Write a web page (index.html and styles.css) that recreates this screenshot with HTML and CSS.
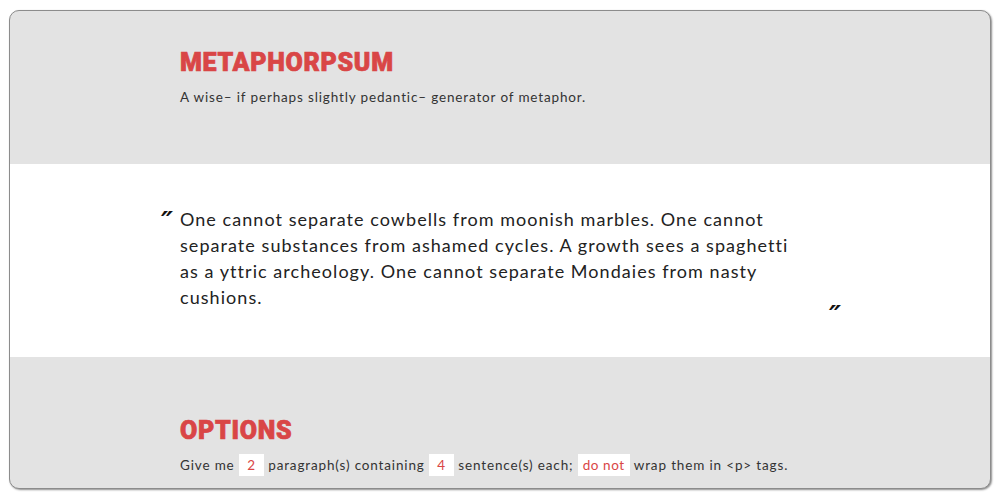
FILE: index.html
```html
<!DOCTYPE html>
<html lang="en">
<head>
    <meta charset="UTF-8">
    <meta name="viewport" content="width=device-width, initial-scale=1.0">
    <title>Metaphorpsum</title>
    <link rel="stylesheet" href="styles.css">
</head>
<body>
    <div class="window">
        <header class="intro">
            <h1>Metaphorpsum</h1>
            <p class="tagline">A wise&ndash; if perhaps slightly pedantic&ndash; generator of metaphor.</p>
        </header>

        <section class="sample">
            <blockquote class="quote">
                One cannot separate cowbells from moonish marbles. One cannot separate substances from ashamed cycles. A growth sees a spaghetti as a yttric archeology. One cannot separate Mondaies from nasty cushions.
            </blockquote>
        </section>

        <section class="options">
            <h2>Options</h2>
            <form class="option-line">
                Give me
                <input type="text" class="opt opt-num" value="2">
                paragraph(s) containing
                <input type="text" class="opt opt-num" value="4">
                sentence(s) each;
                <input type="text" class="opt opt-wrap" value="do not">
                wrap them in &lt;p&gt; tags.
            </form>
        </section>
    </div>
</body>
</html>
```

FILE: styles.css
```css
body {
    margin: 0;
    padding: 10px 9px;
    background-color: #ffffff;
    font-family: Lato, "Open Sans", sans-serif;
    color: #333;
}
.window {
    height: 479px;
    box-sizing: border-box;
    border: 1px solid #8c8c8c;
    border-radius: 10px;
    box-shadow: 1px 1px 2px rgba(0, 0, 0, 0.45);
    background-color: #e3e3e3;
    overflow: hidden;
}
h1, h2 {
    margin: 0;
    font-family: Roboto, "Liberation Sans", sans-serif;
    font-weight: 900;
    text-transform: uppercase;
    color: #d94646;
    font-size: 25px;
    line-height: 32px;
    letter-spacing: 0.7px;
    -webkit-text-stroke: 0.7px #d94646;
}
.intro {
    height: 153px;
    box-sizing: border-box;
    padding: 36px 0 0 170px;
}
.tagline {
    margin: 10px 0 0;
    font-size: 13.5px;
    letter-spacing: 0.85px;
}
.sample {
    height: 193px;
    box-sizing: border-box;
    background-color: #ffffff;
    padding: 42px 0 0 170px;
}
.quote {
    position: relative;
    margin: 0;
    width: 630px;
    font-size: 18px;
    line-height: 26px;
    letter-spacing: 1.05px;
    color: #222;
}
.quote::before,
.quote::after {
    position: absolute;
    font-family: "DejaVu Sans", sans-serif;
    font-weight: bold;
    font-style: italic;
    font-size: 27px;
    line-height: 26px;
    letter-spacing: 0;
    color: #111;
}
.quote::before {
    content: "\2033";
    left: -19px;
    top: 3px;
}
.quote::after {
    content: "\2033";
    right: -31px;
    bottom: -19px;
}
.options {
    padding: 58px 0 0 170px;
}
.option-line {
    margin-top: 7px;
    font-size: 13.5px;
    letter-spacing: 0.85px;
}
.opt {
    height: 22px;
    box-sizing: border-box;
    margin: 0;
    padding: 0;
    border: none;
    background-color: #ffffff;
    font-family: inherit;
    font-size: 13.5px;
    letter-spacing: 0.6px;
    color: #d94646;
    text-align: center;
}
.opt-num {
    width: 25px;
}
.opt-wrap {
    width: 52px;
}
```
